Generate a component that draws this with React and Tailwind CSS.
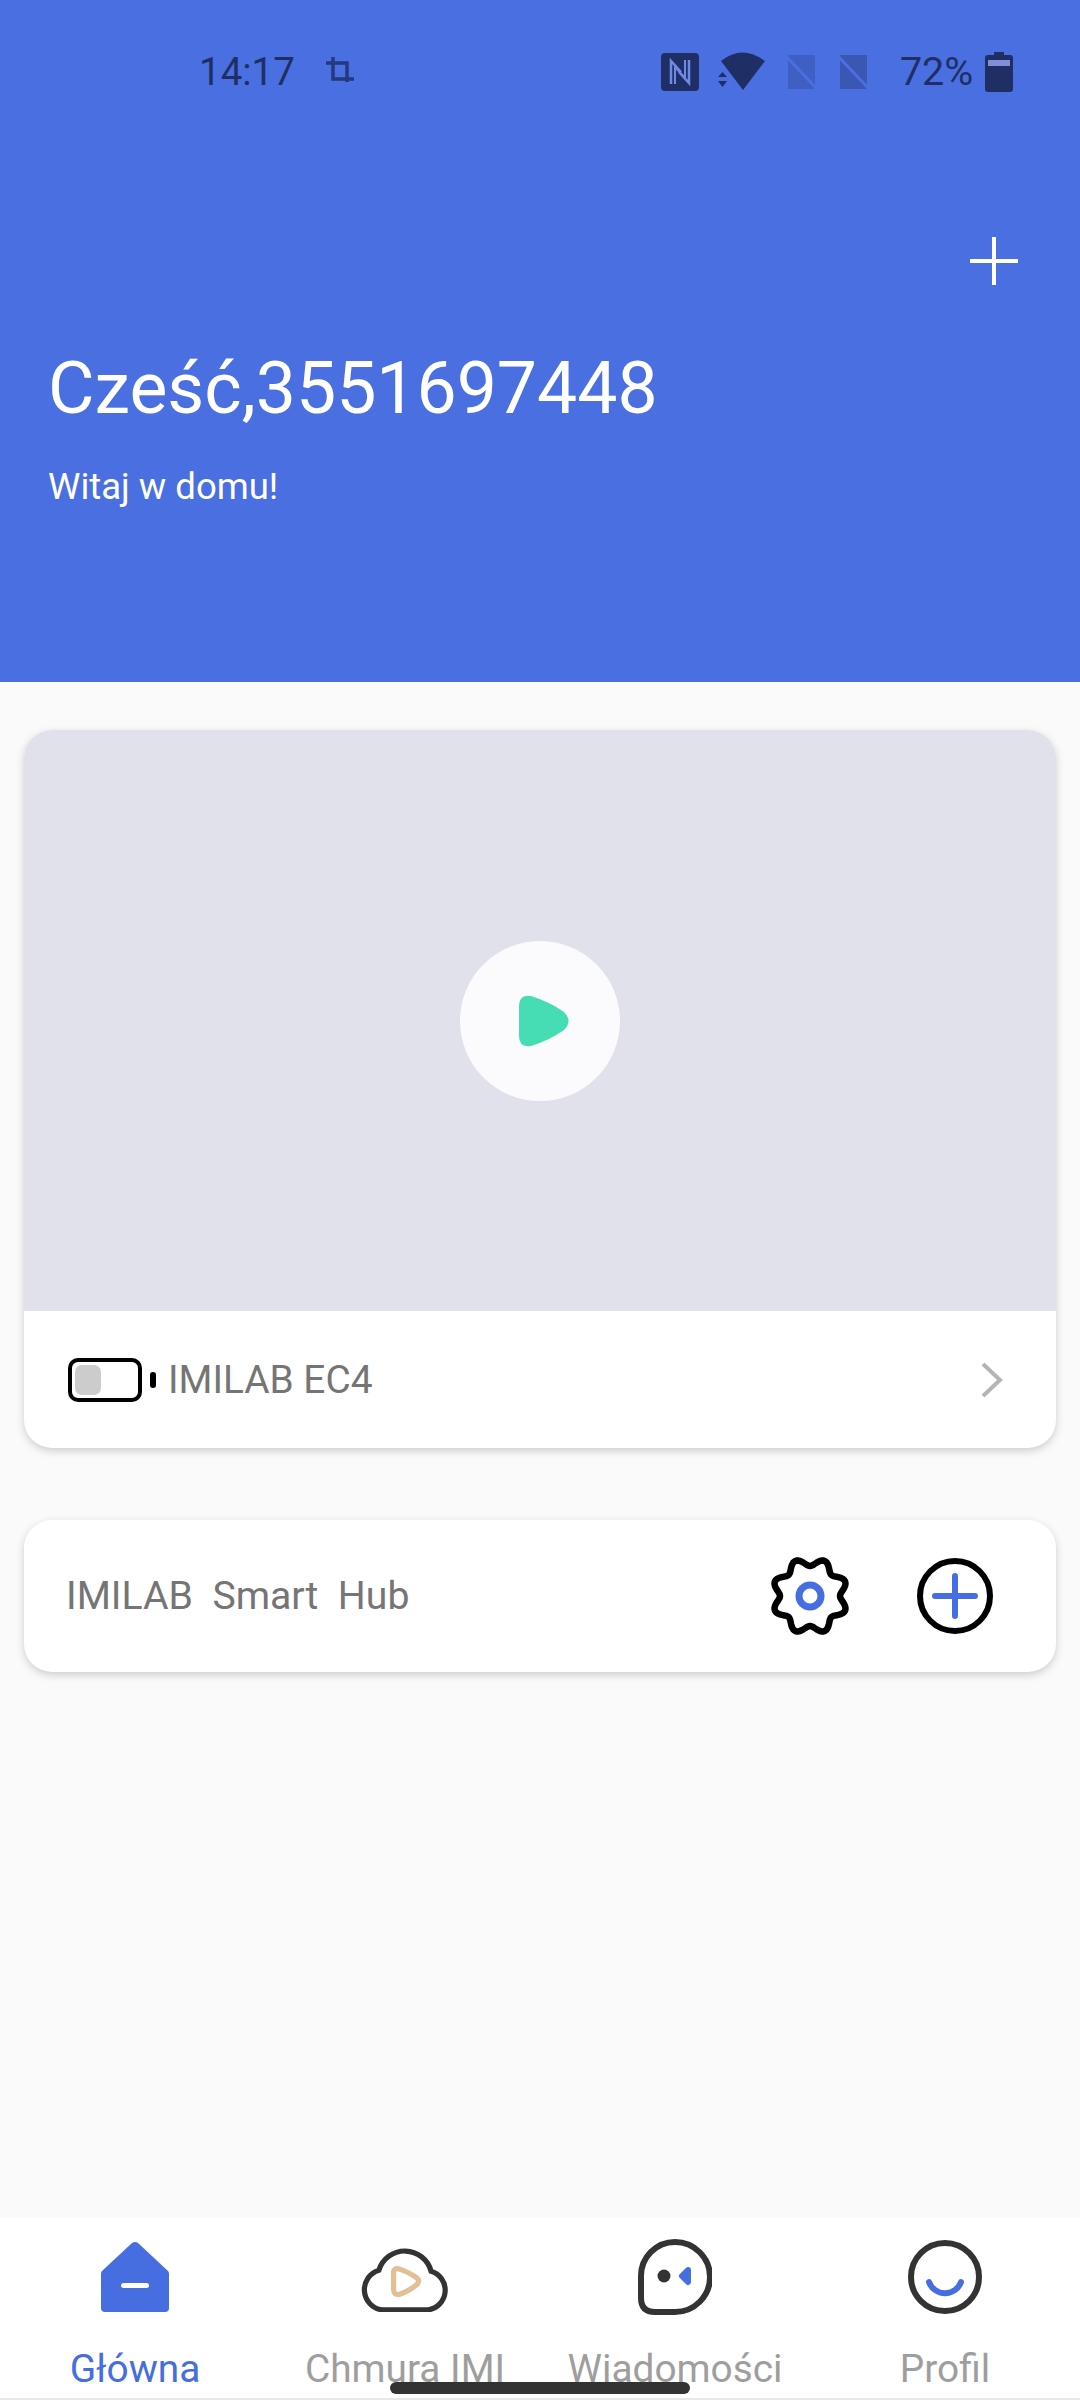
const roboto = "font-['Roboto',sans-serif]"

// wavy 8 lobe gear outline
const gearPath = (() => {
  const pts = []
  for (let i = 0; i < 160; i++) {
    const t = (i / 160) * Math.PI * 2
    const r = 34 + 4 * Math.cos(8 * t - Math.PI)
    pts.push((42 + r * Math.sin(t)).toFixed(2) + " " + (42 - r * Math.cos(t)).toFixed(2))
  }
  return "M" + pts.join("L") + "Z"
})()

export default function App() {
  return (
    <div className={"relative flex h-[2400px] w-[1080px] flex-col overflow-hidden bg-[#fafafa] " + roboto}>
      <Header />
      <main className="flex flex-1 flex-col gap-[72px] px-6 pt-12">
        <CameraCard />
        <HubCard />
      </main>
      <BottomNav />
      <div className="absolute bottom-[6px] left-[390px] h-3 w-[300px] rounded-full bg-[#333333]" />
    </div>
  )
}

function Header() {
  return (
    <header className="flex h-[682px] flex-col bg-[#4a6fe0] text-white">
      <StatusBar />
      <div className="flex justify-end pr-[62px] pt-[141px]">
        <svg width="48" height="48" viewBox="0 0 48 48" fill="none" stroke="#fff" strokeWidth="4">
          <path d="M24 0V48M0 24H48" />
        </svg>
      </div>
      <h1 className="pl-[48px] pt-[64px] text-[71.500px] leading-[80px]">Cześć,3551697448</h1>
      <p className="pl-[48px] pt-[37px] text-[36.500px] leading-[42px]">Witaj w domu!</p>
    </header>
  )
}

function StatusBar() {
  return (
    <div className="flex h-[96px] items-center pl-[199px] pt-[48px] text-[#1f2f66]">
      <span className="text-[38.500px] leading-none">14:17</span>
      <svg className="ml-[30px]" width="30" height="30" viewBox="0 0 30 30" fill="none" stroke="#24397f" strokeWidth="3.5">
        <path d="M1 6H22V25M8 0V22H29" />
      </svg>
      <svg className="ml-[306px]" width="38" height="38" viewBox="0 0 38 38">
        <rect width="38" height="38" rx="4" fill="#1f2f66" />
        <path d="M10 31V8L20 19M28 7V30L18 19" fill="none" stroke="#6f8ae6" strokeWidth="2.500" />
        <path d="M14 31V14L24 25V7" fill="none" stroke="#6f8ae6" strokeWidth="2" />
      </svg>
      <svg className="ml-[19px]" width="48" height="40" viewBox="0 0 48 40">
        <path d="M3 9Q24 -8 47 9L25 38Z" fill="#1f2f66" />
        <path d="M0 25L9 25L4.500 20ZM0 29L9 29L4.500 35Z" fill="#1f2f66" />
      </svg>
      <Sim className="ml-[18px]" fill="#3f5fc4" />
      <Sim className="ml-[16px]" fill="#3a57b4" />
      <span className="ml-[28px] text-[39.500px] leading-none">72%</span>
      <svg className="ml-[12px]" width="28" height="40" viewBox="0 0 28 40">
        <path d="M9 0H19V3H25Q28 3 28 6V37Q28 40 25 40H3Q0 40 0 37V6Q0 3 3 3H9Z" fill="#1f2f66" />
        <rect x="3" y="8" width="22" height="6" fill="#7d90d8" />
      </svg>
    </div>
  )
}

function Sim({ className, fill }) {
  return (
    <svg className={className} width="36" height="38" viewBox="0 0 36 38">
      <path d="M4 2H31V36H4Z" fill={fill} />
      <path d="M0 1L34 37" stroke="#4a6fe0" strokeWidth="3" />
    </svg>
  )
}

function CameraCard() {
  return (
    <section className="h-[718px] overflow-hidden rounded-[28px] bg-white shadow-[0_3px_8px_rgba(0,0,0,0.18)]">
      <div className="flex h-[581px] items-center justify-center bg-[#e0e1ea]">
        <div className="flex h-40 w-40 items-center justify-center rounded-full bg-[#fbfbfd]">
          <svg className="ml-[7px]" width="52" height="52" viewBox="0 0 52 52">
            <path d="M1 12Q1 -1 13 1Q32 7 46 17Q55 26 46 35Q32 45 13 51Q1 53 1 40Z" fill="#46dcb4" />
          </svg>
        </div>
      </div>
      <div className="flex h-[137px] items-center pl-11 pr-[52px]">
        <svg width="88" height="44" viewBox="0 0 88 44">
          <rect x="2" y="2" width="70" height="40" rx="8" fill="#fff" stroke="#000" strokeWidth="4" />
          <rect x="7" y="7" width="26" height="30" rx="7" fill="#cccccc" />
          <rect x="82" y="14" width="6" height="16" rx="3" fill="#000" />
        </svg>
        <span className="ml-[12px] mt-[2px] flex-1 text-[38.800px] leading-none text-[#757575]">IMILAB EC4</span>
        <svg width="24" height="36" viewBox="0 0 24 36" fill="none" stroke="#b5b5b5" strokeWidth="4">
          <path d="M3 2L20 18L3 34" />
        </svg>
      </div>
    </section>
  )
}

function HubCard() {
  return (
    <section className="flex h-[152px] items-center rounded-[28px] bg-white pl-[42px] pr-[63px] shadow-[0_3px_8px_rgba(0,0,0,0.18)]">
      <span className="mt-[2px] flex-1 whitespace-pre text-[39.200px] leading-none text-[#757575]">IMILAB  Smart  Hub</span>
      <svg width="84" height="84" viewBox="0 0 84 84" fill="none">
        <path d={gearPath} stroke="#000" strokeWidth="6.500" strokeLinejoin="round" />
        <circle cx="42" cy="42" r="11" stroke="#466ee0" strokeWidth="7" />
      </svg>
      <svg className="ml-[65px]" width="76" height="76" viewBox="0 0 76 76" fill="none">
        <circle cx="38" cy="38" r="35" stroke="#000" strokeWidth="6" />
        <path d="M18 38H58M38 18V58" stroke="#466ee0" strokeWidth="6" strokeLinecap="round" />
      </svg>
    </section>
  )
}

function BottomNav() {
  return (
    <nav className="grid h-[182px] grid-cols-4 border-b-2 border-[#e8e8e8] bg-white">
      <Tab label="Główna" active>
        <svg width="68" height="70" viewBox="0 0 68 70">
          <path d="M31 1Q34 -1 37 1L67 29Q68 30 68 32V66Q68 70 64 70H4Q0 70 0 66V32Q0 30 1 29Z" fill="#466ee0" />
          <rect x="20" y="41" width="28" height="5" rx="2.500" fill="#fff" />
        </svg>
      </Tab>
      <Tab label="Chmura IMI">
        <svg width="88" height="70" viewBox="2 1 84 67" fill="none">
          <path d="M22 66H66A19 19 0 0 0 69 29A26 26 0 0 0 19 28A19.500 19.500 0 0 0 22 66Z" stroke="#333" strokeWidth="5" />
          <path d="M33 31Q33 25 39 27Q50 31 56 36Q58 38 56 41Q50 47 39 51Q33 52 33 46Z" stroke="#e3bf95" strokeWidth="5" strokeLinejoin="round" />
        </svg>
      </Tab>
      <Tab label="Wiadomości">
        <svg width="74" height="76" viewBox="0 0 74 76" fill="none">
          <path d="M37 3A34 34 0 0 1 37 73H17Q3 73 3 59V37A34 34 0 0 1 37 3Z" stroke="#333" strokeWidth="6" />
          <circle cx="26" cy="37" r="6.500" fill="#333" />
          <path d="M50 31L44 37L50 43Z" fill="#466ee0" stroke="#466ee0" strokeWidth="6" strokeLinecap="round" strokeLinejoin="round" />
        </svg>
      </Tab>
      <Tab label="Profil">
        <svg width="74" height="76" viewBox="0 0 74 76" fill="none">
          <circle cx="37" cy="38" r="34" stroke="#333" strokeWidth="6" />
          <path d="M21 43A17 17 0 0 0 53 43" stroke="#466ee0" strokeWidth="6" strokeLinecap="round" />
        </svg>
      </Tab>
    </nav>
  )
}

function Tab({ label, active, children }) {
  return (
    <div className="flex flex-col items-center pt-[21px]">
      <div className="flex h-[76px] items-center justify-center">{children}</div>
      <span className={"mt-[31px] text-[38.800px] leading-[46px] " + (active ? "text-[#466ee0]" : "text-[#9e9e9e]")}>
        {label}
      </span>
    </div>
  )
}
